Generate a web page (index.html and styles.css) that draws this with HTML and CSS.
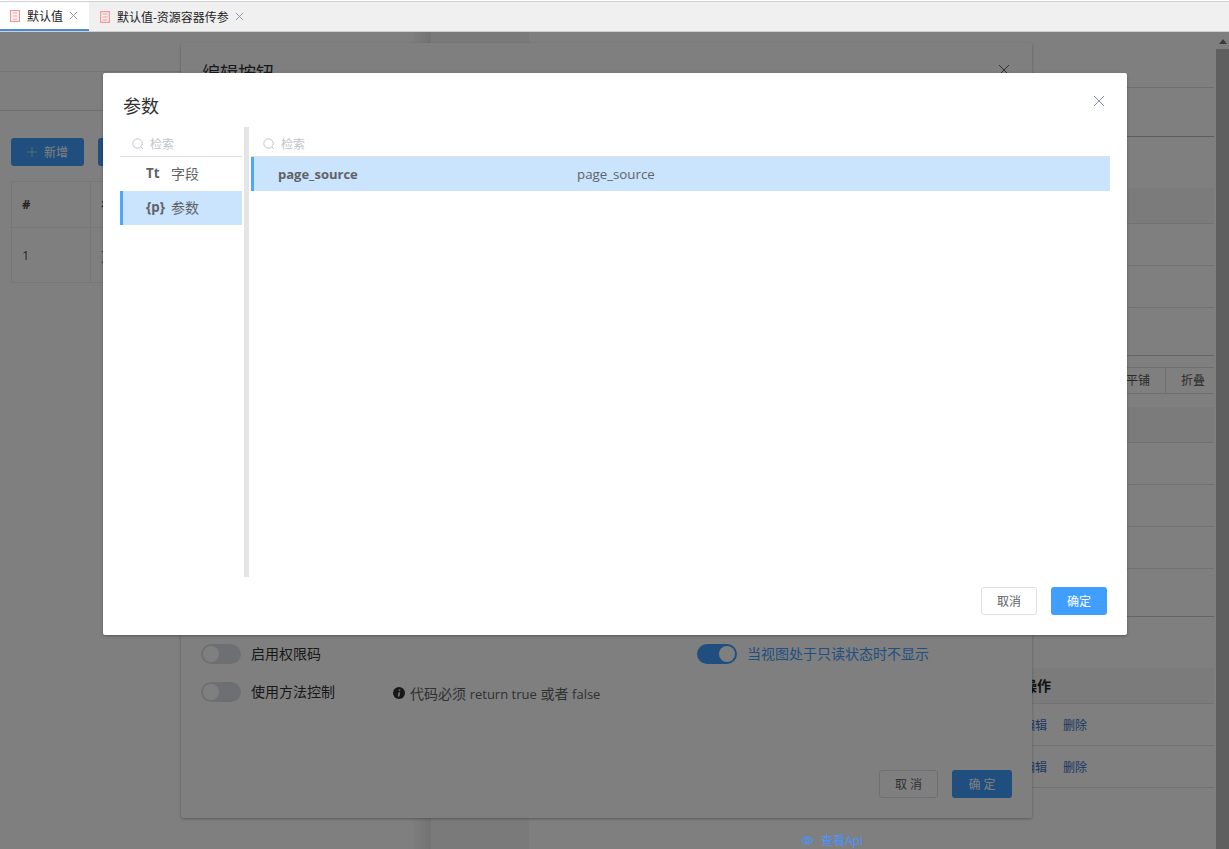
FILE: index.html
```html
<!DOCTYPE html>
<html lang="en">
<head>
    <meta charset="UTF-8">
    <meta name="viewport" content="width=device-width, initial-scale=1.0">
    <title>默认值</title>
    <link rel="stylesheet" href="styles.css">
</head>
<body>

    <!-- TABS -->
    <div class="tabs">
        <div class="tab active">
            <svg class="tab-icon" viewBox="0 0 10 12"><path d="M.6.6h8.800v10.800H.6zM2.500 3h5M2.500 6h5M2.500 9h5" /></svg>
            <span>默认值</span>
            <svg class="tab-close" viewBox="0 0 10 10"><path d="M1 1l8 8M9 1l-8 8" /></svg>
        </div>
        <div class="tab">
            <svg class="tab-icon" viewBox="0 0 10 12"><path d="M.6.6h8.800v10.800H.6zM2.500 3h5M2.500 6h5M2.500 9h5" /></svg>
            <span>默认值-资源容器传参</span>
            <svg class="tab-close" viewBox="0 0 10 10"><path d="M1 1l8 8M9 1l-8 8" /></svg>
        </div>
    </div>

    <div class="page">
        <!-- LEFT PANEL -->
        <div class="left">
            <div class="left-head"></div>
            <div class="left-sub"></div>
            <div class="left-btns">
                <button class="add-btn">
                    <svg class="plus" viewBox="0 0 10 10"><path d="M5 0v10M0 5h10" /></svg>
                    <span>新增</span>
                </button>
                <button class="add-btn"></button>
            </div>
            <div class="grid">
                <div class="cell head">#</div>
                <div class="cell head">名称</div>
                <div class="cell">1</div>
                <div class="cell">页面</div>
            </div>
        </div>

        <div class="mid"></div>

        <!-- RIGHT PANEL -->
        <div class="right">
            <div class="r-top"></div>
            <div class="r-second"></div>
            <div class="r-band first"></div>
            <div class="r-row"></div>
            <div class="r-row"></div>
            <div class="r-row last"></div>
            <div class="seg">
                <span class="seg-item">平铺</span>
                <span class="seg-item">折叠</span>
            </div>
            <div class="r-band"></div>
            <div class="r-row"></div>
            <div class="r-row"></div>
            <div class="r-row"></div>
            <div class="r-row last"></div>
            <div class="r-band table-head"><span>操作</span></div>
            <div class="r-row action"><a>编辑</a><a>删除</a></div>
            <div class="r-row action"><a>编辑</a><a>删除</a></div>
        </div>

        <div class="scrollbar">
            <div class="scroll-top"><span class="arrow"></span></div>
        </div>
    </div>

    <!-- EDIT BUTTON DIALOG -->
    <div class="edit-dialog">
        <div class="edit-title">编辑按钮</div>
        <svg class="edit-close" viewBox="0 0 10 10"><path d="M0 0l10 10M10 0L0 10" /></svg>
        <div class="edit-body">
            <div class="edit-row">
                <div class="switch-item">
                    <span class="switch"></span>
                    <span>启用权限码</span>
                </div>
                <div class="switch-item on">
                    <span class="switch"></span>
                    <span>当视图处于只读状态时不显示</span>
                </div>
            </div>
            <div class="edit-row">
                <div class="switch-item">
                    <span class="switch"></span>
                    <span>使用方法控制</span>
                </div>
                <div class="note">
                    <svg class="note-icon" viewBox="0 0 12 12"><circle cx="6" cy="6" r="6" /><path d="M6.500 2.500v1.300M6.300 5.300L5.600 9.500" /></svg>
                    <span>代码必须 <span class="latin">return true</span> 或者 <span class="latin">false</span></span>
                </div>
            </div>
        </div>
        <div class="edit-foot">
            <button class="edit-btn">取 消</button>
            <button class="edit-btn primary">确 定</button>
        </div>
    </div>

    <!-- PARAM DIALOG -->
    <div class="mask">
        <div class="dialog">
            <div class="dialog-head">
                <span class="dialog-title">参数</span>
                <svg class="dialog-close" viewBox="0 0 10 10"><path d="M0 0l10 10M10 0L0 10" /></svg>
            </div>
            <div class="dialog-body">
                <div class="types">
                    <div class="search">
                        <svg class="search-icon" viewBox="0 0 12 12"><circle cx="5.500" cy="5.500" r="4.700" /><path d="M9 9l2 2" /></svg>
                        <span>检索</span>
                    </div>
                    <div class="type-item"><b>Tt</b><span>字段</span></div>
                    <div class="type-item selected"><b>{p}</b><span>参数</span></div>
                </div>
                <div class="divider"></div>
                <div class="values">
                    <div class="search">
                        <svg class="search-icon" viewBox="0 0 12 12"><circle cx="5.500" cy="5.500" r="4.700" /><path d="M9 9l2 2" /></svg>
                        <span>检索</span>
                    </div>
                    <div class="value-item selected">
                        <b>page_source</b>
                        <span>page_source</span>
                    </div>
                </div>
            </div>
            <div class="dialog-foot">
                <button class="btn">取消</button>
                <button class="btn primary">确定</button>
            </div>
        </div>
    </div>

    <!-- API LINK -->
    <div class="api-link">
        <svg class="eye" viewBox="0 0 14 10"><path d="M.8 5C2.500 2 4.500.8 7 .8S11.500 2 13.200 5C11.500 8 9.500 9.200 7 9.200S2.500 8 .8 5z" /><circle cx="7" cy="5" r="2" /></svg>
        <span>查看Api</span>
    </div>

</body>
</html>
```

FILE: styles.css
```css
* {
    margin: 0;
    padding: 0;
    box-sizing: border-box;
    font-family: "Open Sans", "Noto Sans CJK SC", sans-serif;
}

body {
    width: 1229px;
    height: 849px;
    overflow: hidden;
    background: white;
    position: relative;
    color: #606266;
}

button { font-size: 12px; }

/* TABS */
.tabs {
    height: 31px;
    margin-top: 1px;
    display: flex;
    background: #f0f0f0;
    border-top: 1px solid #d0d0d0;
    border-bottom: 1px solid #cfcfcf;
    color: #222;
    font-size: 12px;
}

.tab {
    display: flex;
    align-items: center;
    height: 29px;
    padding: 0 10px 0 11px;
    gap: 7px;
}

.tab.active {
    width: 89px;
    padding-left: 10px;
    background: white;
    border-bottom: 2px solid #4a8ad4;
}

.tab-icon {
    width: 10px;
    height: 12px;
    fill: none;
    stroke: #f59a9a;
    stroke-width: 1.200;
}

.tab-close {
    width: 9px;
    height: 9px;
    margin-left: -1px;
    fill: none;
    stroke: #8d8d99;
    stroke-width: 1;
}

/* BACKGROUND PAGE */
.page {
    display: flex;
    height: 817px;
}

.left {
    width: 431px;
    background: linear-gradient(to right, transparent 410px, rgba(0, 0, 0, 0.1) 431px);
}

.left-head {
    height: 40px;
    border-bottom: 1px solid #e6e6e6;
}

.left-sub {
    height: 39px;
    border-bottom: 1px solid #dcdcdc;
}

.left-btns {
    display: flex;
    gap: 14px;
    padding: 27px 0 0 11px;
}

.add-btn {
    display: flex;
    align-items: center;
    justify-content: center;
    gap: 7px;
    width: 73px;
    height: 28px;
    border: none;
    border-radius: 3px;
    background: #409eff;
    color: white;
    font-size: 12px;
}

.plus {
    width: 10px;
    height: 10px;
    fill: none;
    stroke: #9fe0e0;
    stroke-width: 1;
}

.grid {
    display: grid;
    grid-template-columns: 79px 340px;
    grid-template-rows: 46px 55px;
    margin: 15px 0 0 11px;
    border-top: 1px solid #ebeef5;
    border-left: 1px solid #ebeef5;
    font-size: 13px;
    color: #555;
}

.cell {
    padding-left: 10px;
    display: flex;
    align-items: center;
    border-right: 1px solid #ebeef5;
    border-bottom: 1px solid #ebeef5;
}

.cell.head {
    padding-bottom: 2px;
    font-weight: 700;
    color: #444;
}

.mid {
    width: 98px;
    background: #f5f5f5;
}

.right {
    flex: 1;
    margin-right: 15px;
    font-size: 12px;
}

.r-top {
    height: 56px;
    border-bottom: 1px solid #dcdcdc;
}

.r-second {
    height: 49px;
    margin-bottom: 51px;
    border-bottom: 1px solid #bbb;
}

.r-band {
    height: 36px;
    background: #f7f7f7;
    border-bottom: 1px solid #e5e5e5;
}

.r-row {
    height: 42px;
    border-bottom: 1px solid #e5e5e5;
}

.r-row.last {
    height: 48px;
    border-bottom: 1px solid #c8c8c8;
}

.seg {
    display: flex;
    justify-content: flex-end;
    height: 27px;
    margin: 11px 0 13px;
    border-top: 1px solid #dcdcdc;
    border-bottom: 1px solid #dcdcdc;
}

.seg-item {
    width: 55px;
    padding-left: 15px;
    border-left: 1px solid #dcdcdc;
    font-size: 12px;
    line-height: 25px;
    color: #555;
}

.seg-item:last-child { width: 49px; }

.table-head {
    margin-top: 51px;
    padding-left: 494px;
    font-size: 14px;
    font-weight: 700;
    color: #222;
    line-height: 36px;
}

.action {
    padding-left: 494px;
    line-height: 43px;
}

.action a {
    color: #3a6fc4;
    margin-right: 16px;
}

.scrollbar {
    position: absolute;
    top: 32px;
    right: 0;
    bottom: 0;
    width: 13px;
    background: #bfbfbf;
}

.scroll-top {
    display: flex;
    justify-content: center;
    height: 17px;
    padding-top: 7px;
    background: white;
}

.arrow {
    width: 0;
    height: 0;
    border-left: 4px solid transparent;
    border-right: 4px solid transparent;
    border-bottom: 5px solid #777;
}

.api-link {
    position: absolute;
    left: 801px;
    top: 831px;
    display: flex;
    align-items: center;
    gap: 8px;
    font-size: 12px;
    color: #4a94ff;
}

.eye {
    width: 12px;
    height: 9px;
    fill: none;
    stroke: #4a94ff;
    stroke-width: 1.400;
}

/* EDIT BUTTON DIALOG */
.edit-dialog {
    position: absolute;
    left: 181px;
    top: 43px;
    width: 851px;
    height: 775px;
    background: white;
    border-radius: 2px;
    box-shadow: 0 1px 3px rgba(0, 0, 0, 0.3);
    color: #303133;
}

.edit-title {
    position: absolute;
    left: 21px;
    top: 16px;
    font-size: 18px;
}

.edit-close {
    position: absolute;
    left: 818px;
    top: 22px;
    width: 10px;
    height: 10px;
    fill: none;
    stroke: #606266;
    stroke-width: 1;
}

.edit-body {
    position: absolute;
    left: 20px;
    top: 601px;
    right: 0;
    display: flex;
    flex-direction: column;
    gap: 18px;
    font-size: 14px;
}

.edit-row {
    display: flex;
    height: 20px;
}

.switch-item {
    width: 192px;
    display: flex;
    align-items: center;
    gap: 10px;
}

.switch-item span:last-child { margin-top: -3px; }

.switch-item.on {
    margin-left: 304px;
    width: 300px;
    color: #409eff;
}

.switch {
    width: 40px;
    height: 20px;
    flex: none;
    border-radius: 10px;
    background: #dcdfe6;
    position: relative;
}

.switch::after {
    content: "";
    position: absolute;
    left: 2px;
    top: 2px;
    width: 16px;
    height: 16px;
    border-radius: 50%;
    background: white;
}

.on .switch { background: #409eff; }
.on .switch::after { left: 22px; }

.note {
    display: flex;
    align-items: center;
    gap: 5px;
    margin-top: 2px;
    color: #606266;
}

.latin { font-size: 13px; }

.note-icon {
    width: 12px;
    height: 12px;
    fill: #303133;
    stroke: white;
    stroke-width: 1.500;
}

.note-icon circle { stroke: none; }

.edit-foot {
    position: absolute;
    right: 20px;
    top: 727px;
    display: flex;
    gap: 14px;
}

.edit-btn {
    width: 59px;
    height: 28px;
    border: 1px solid #dcdfe6;
    border-radius: 3px;
    background: white;
    color: #606266;
}

.edit-btn.primary {
    width: 60px;
    border: none;
    background: #409eff;
    color: white;
}

/* PARAM DIALOG */
.mask {
    position: absolute;
    top: 32px;
    left: 0;
    right: 0;
    bottom: 0;
    background: rgba(0, 0, 0, 0.5);
}

.dialog {
    position: absolute;
    top: 41px;
    left: 103px;
    width: 1024px;
    height: 562px;
    display: flex;
    flex-direction: column;
    background: white;
    border-radius: 2px;
    box-shadow: 0 1px 3px rgba(0, 0, 0, 0.3);
}

.dialog-head {
    display: flex;
    justify-content: space-between;
    align-items: flex-start;
    height: 54px;
    padding: 20px 23px 0 20px;
}

.dialog-title {
    font-size: 18px;
    line-height: 26px;
    color: #303133;
}

.dialog-close {
    width: 10px;
    height: 10px;
    margin-top: 3px;
    fill: none;
    stroke: #8a94a6;
    stroke-width: 1;
}

.dialog-body {
    display: flex;
    height: 450px;
    padding-left: 17px;
    font-size: 14px;
}

.types { width: 122px; }

.divider {
    width: 5px;
    margin: 0 2px;
    background: #e5e5e5;
}

.values { width: 859px; }

.search {
    display: flex;
    align-items: center;
    height: 30px;
    padding: 4px 0 0 12px;
    gap: 6px;
    border-bottom: 1px solid #e0e0e6;
    font-size: 12px;
    color: #c0c4cc;
}

.search-icon {
    width: 12px;
    height: 12px;
    fill: none;
    stroke: #c0c4cc;
    stroke-width: 1;
}

.type-item {
    display: flex;
    align-items: center;
    gap: 10px;
    height: 34px;
    padding: 0 0 2px 26px;
    color: #606266;
}

.type-item b {
    width: 15px;
    font-size: 13.300px;
    white-space: nowrap;
}

.selected {
    background: #cae4fd;
    border-left: 3px solid #4da6ff;
}

.type-item.selected { padding-left: 23px; }

.value-item {
    display: flex;
    align-items: center;
    height: 34px;
    padding-left: 24px;
    font-size: 13.300px;
    color: #606266;
}

.value-item b {
    width: 299px;
    font-size: 13px;
    font-weight: 700;
}

.dialog-foot {
    display: flex;
    justify-content: flex-end;
    gap: 14px;
    padding: 10px 20px 0 0;
}

.btn {
    width: 56px;
    height: 28px;
    border: 1px solid #dcdfe6;
    border-radius: 3px;
    background: white;
    color: #606266;
}

.btn.primary {
    border: none;
    background: #409eff;
    color: white;
}
```
